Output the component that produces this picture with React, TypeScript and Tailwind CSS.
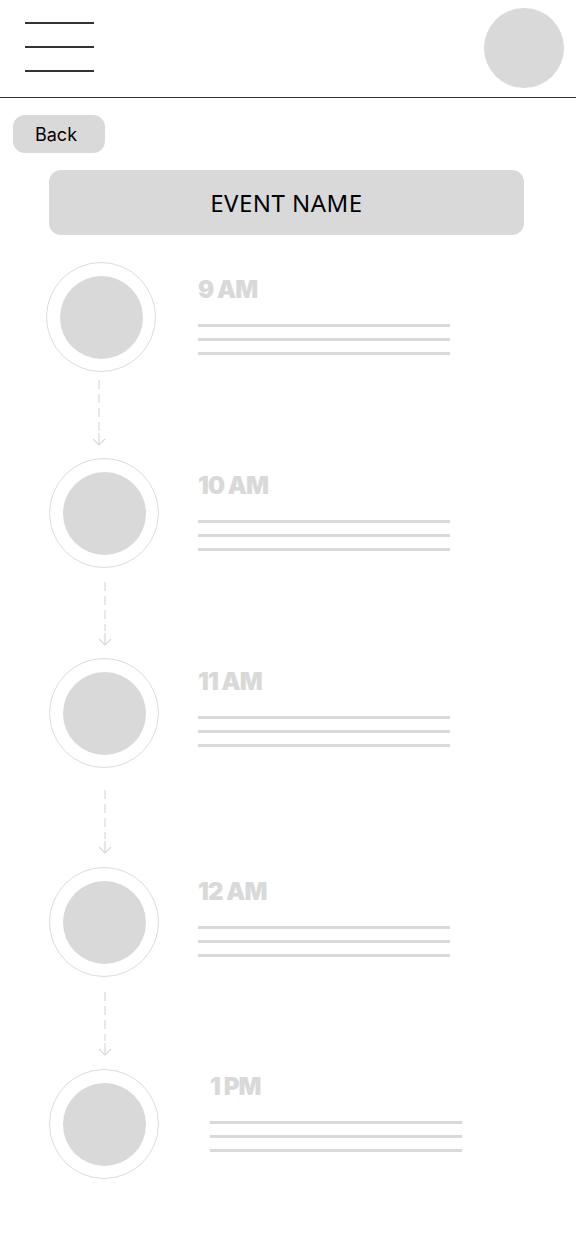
import React from "react";

function Connector({ height, x, lineTop, lineBottom }: { height: number; x: number; lineTop: number; lineBottom: number }) {
  return (
    <div className="relative w-full" style={{ height }}>
      <svg className="absolute left-0 top-0" width="200" height={height} viewBox={`0 0 200 ${height}`}>
        <line x1={x} y1={lineTop} x2={x} y2={lineBottom - 14} stroke="#d9d9d9" strokeWidth="1.2" strokeDasharray="9 5" />
        <line x1={x} y1={lineBottom - 12} x2={x} y2={lineBottom} stroke="#d9d9d9" strokeWidth="1.2" />
        <polyline points={`${x - 6},${lineBottom - 6} ${x},${lineBottom} ${x + 6},${lineBottom - 6}`} fill="none" stroke="#d9d9d9" strokeWidth="1.2" />
      </svg>
    </div>
  );
}

function Item({ circleLeft, contentLeft, time, textTop, linesTop }: { circleLeft: number; contentLeft: number; time: string; textTop: number; linesTop: number }) {
  return (
    <div className="relative flex h-[110px]">
      <div className="shrink-0" style={{ width: circleLeft }} />
      <div className="flex h-[110px] w-[110px] shrink-0 items-center justify-center rounded-full border-[1.5px] border-[#dcdcdc] bg-white">
        <div className="h-[83px] w-[83px] rounded-full bg-[#d9d9d9]" />
      </div>
      <div className="flex flex-col" style={{ marginLeft: contentLeft - circleLeft - 110 }}>
        <div
          className="h-[23px] text-[24px] font-black leading-none tracking-[-0.04em] text-[#d9d9d9]"
          style={{ fontFamily: "Inter, 'Noto Sans', sans-serif", marginTop: textTop }}
        >
          {time}
        </div>
        <div className="flex flex-col gap-[11px]" style={{ marginTop: linesTop }}>
          <div className="h-[3px] w-[252px] bg-[#d9d9d9]" />
          <div className="h-[3px] w-[252px] bg-[#d9d9d9]" />
          <div className="h-[3px] w-[252px] bg-[#d9d9d9]" />
        </div>
      </div>
    </div>
  );
}

export default function App() {
  return (
    <div className="min-h-[1244px] w-[576px] bg-white" style={{ fontFamily: "Inter, 'Noto Sans', sans-serif" }}>
      <header className="flex h-[98px] items-start justify-between border-b-[1.5px] border-[#333333]">
        <div className="ml-[25px] mt-[22px] flex w-[69px] flex-col gap-[22px]">
          <div className="h-[2px] bg-[#333333]" />
          <div className="h-[2px] bg-[#333333]" />
          <div className="h-[2px] bg-[#333333]" />
        </div>
        <div className="mr-[12px] mt-[8px] h-[80px] w-[80px] rounded-full bg-[#d9d9d9]" />
      </header>
      <div className="ml-[13px] mt-[17px] flex h-[38px] w-[92px] items-center justify-center rounded-[12px] bg-[#d9d9d9] pr-[6px] text-[18px] text-black">
        Back
      </div>
      <div
        className="ml-[49px] mt-[17px] flex h-[65px] w-[475px] items-center justify-center rounded-[12px] bg-[#d9d9d9] text-[24px] tracking-[0.02em] text-black"
        style={{ fontFamily: "'Noto Sans', sans-serif" }}
      >
        EVENT NAME
      </div>
      <div className="mt-[27px] flex flex-col">
        <Item circleLeft={46} contentLeft={198} time="9 AM" textTop={16} linesTop={23} />
        <Connector height={86} x={99} lineTop={8} lineBottom={73} />
        <Item circleLeft={49} contentLeft={198} time="10 AM" textTop={16} linesTop={23} />
        <Connector height={90} x={105} lineTop={14} lineBottom={77} />
        <Item circleLeft={49} contentLeft={198} time="11 AM" textTop={12} linesTop={23} />
        <Connector height={99} x={105} lineTop={22} lineBottom={85} />
        <Item circleLeft={49} contentLeft={198} time="12 AM" textTop={13} linesTop={23} />
        <Connector height={92} x={105} lineTop={15} lineBottom={78} />
        <Item circleLeft={49} contentLeft={210} time="1 PM" textTop={6} linesTop={23} />
      </div>
    </div>
  );
}
